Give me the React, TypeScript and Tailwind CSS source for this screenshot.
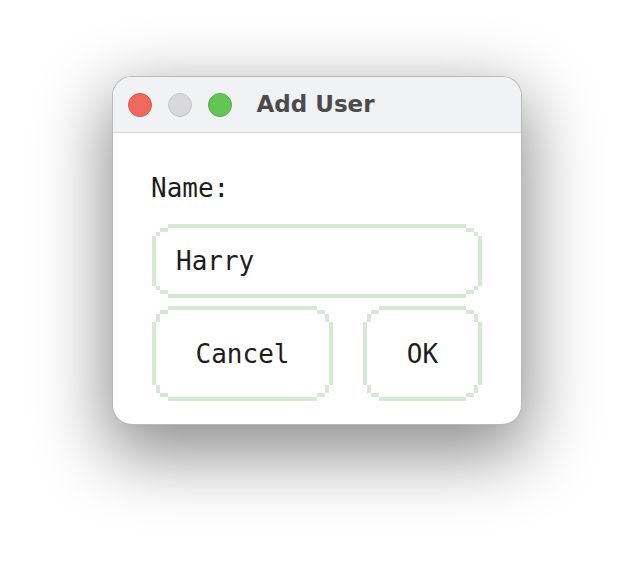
import React from "react";

type R = { x: number; y: number; w: number; h: number };

function PixelFrame({
  w,
  h,
  tall,
  className,
  children,
}: {
  w: number;
  h: number;
  tall?: boolean;
  className?: string;
  children?: React.ReactNode;
}) {
  const t = 4;
  const edge = tall ? 16 : 12;
  const corner: R[] = [
    { x: 8, y: 4, w: 8, h: 4 },
    { x: 4, y: 8, w: 4, h: tall ? 8 : 4 },
  ];
  const rects: R[] = [
    { x: 16, y: 0, w: w - 32, h: t },
    { x: 16, y: h - t, w: w - 32, h: t },
    { x: 0, y: edge, w: t, h: h - 2 * edge },
    { x: w - t, y: edge, w: t, h: h - 2 * edge },
  ];
  corner.forEach((r) => {
    rects.push(r);
    rects.push({ ...r, x: w - r.x - r.w });
    rects.push({ ...r, y: h - r.y - r.h });
    rects.push({ ...r, x: w - r.x - r.w, y: h - r.y - r.h });
  });
  return (
    <div className={"relative shrink-0 " + (className ?? "")} style={{ width: w, height: h }}>
      <svg
        className="absolute inset-0"
        width={w}
        height={h}
        viewBox={`0 0 ${w} ${h}`}
        shapeRendering="crispEdges"
      >
        {rects.map((r, i) => (
          <rect key={i} x={r.x} y={r.y} width={r.w} height={r.h} fill="#d5e8d4" />
        ))}
      </svg>
      <div className="relative flex h-full w-full items-center">{children}</div>
    </div>
  );
}

export default function App() {
  const mono = { fontFamily: '"DejaVu Sans Mono", "Liberation Mono", monospace' };
  return (
    <div className="flex min-h-[574px] w-full justify-center bg-white pt-[76px]">
      <div className="flex h-[349px] w-[410px] flex-col overflow-hidden rounded-[20px] border border-[rgba(0,0,0,0.28)] bg-white shadow-[0_24px_70px_6px_rgba(0,0,0,0.45)]">
        <div className="grid h-[56px] shrink-0 grid-cols-[1fr_auto_1fr] items-center border-b border-[#d6d6d8] bg-[#f1f2f4] pl-[15px] pr-[18px]">
          <div className="flex items-center gap-[16px]">
            <span className="block h-[24px] w-[24px] rounded-full border border-[#d4564b] bg-[#ee6a5f]" />
            <span className="block h-[24px] w-[24px] rounded-full border border-[#c4c4c6] bg-[#d8d8da]" />
            <span className="block h-[24px] w-[24px] rounded-full border border-[#52ad45] bg-[#62c554]" />
          </div>
          <div
            className="text-[23px] font-bold leading-none text-[#4b4b4b]"
            style={{ fontFamily: '"DejaVu Sans", "Liberation Sans", sans-serif' }}
          >
            Add User
          </div>
          <div />
        </div>
        <div className="flex flex-col px-[39px] pt-[40px] text-[#1d1d1d]" style={mono}>
          <div className="-ml-[1px] h-[30px] text-[26px] leading-[30px]">Name:</div>
          <PixelFrame w={330} h={74} className="mt-[21px]">
            <span className="pl-[24px] text-[26px] leading-[30px]">Harry</span>
          </PixelFrame>
          <div className="mt-[8px] flex gap-[30px]">
            <PixelFrame w={181} h={95} tall>
              <span className="w-full text-center text-[26px] leading-[30px]">Cancel</span>
            </PixelFrame>
            <PixelFrame w={119} h={95} tall>
              <span className="w-full text-center text-[26px] leading-[30px]">OK</span>
            </PixelFrame>
          </div>
        </div>
      </div>
    </div>
  );
}
